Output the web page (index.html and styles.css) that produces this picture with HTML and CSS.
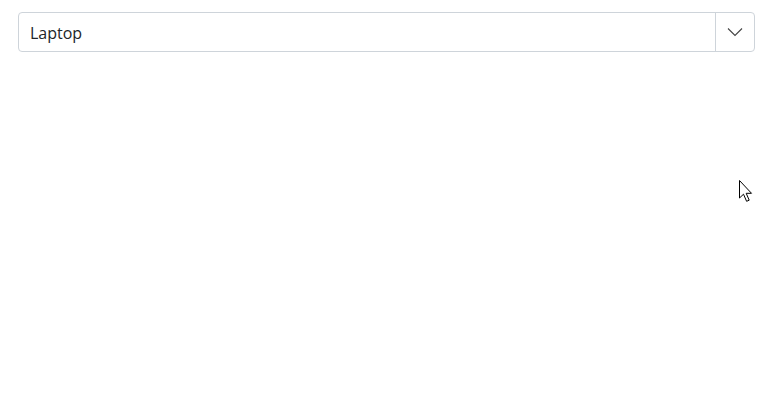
FILE: index.html
```html
<!DOCTYPE html>
<html>
<head>
<meta charset="utf-8">
<link rel="stylesheet" href="styles.css">
</head>
<body>
<div class="page">
  <div class="combo">
    <div class="combo-value">Laptop</div>
    <div class="combo-button">
      <svg width="16" height="10" viewBox="0 0 16 10"><path d="M1 1.5 L8 8.5 L15 1.5" fill="none" stroke="#444" stroke-width="1.1"/></svg>
    </div>
  </div>
</div>
<svg class="cursor" width="18" height="26" viewBox="0 0 18 26"><path d="M1.5 1.5 L1.5 19 L5.5 15.2 L8.6 22.3 L11.2 21.2 L8.2 14.3 L13.5 14.3 Z" fill="#fff" stroke="#000" stroke-width="1"/></svg>
</body>
</html>
```
FILE: styles.css
```css
html, body {
  margin: 0;
  padding: 0;
  background: #fff;
}
.page {
  padding: 12px 20px 0 18px;
}
.combo {
  display: flex;
  height: 40px;
  box-sizing: border-box;
  border: 1px solid #ced4da;
  border-radius: 4px;
  background: #fff;
  font-family: "Open Sans", "Noto Sans", sans-serif;
  font-size: 16px;
  color: #212529;
}
.combo-value {
  flex: 1;
  display: flex;
  align-items: center;
  padding: 2px 0 0 11px;
}
.combo-button {
  width: 38px;
  border-left: 1px solid #ced4da;
  display: flex;
  align-items: center;
  justify-content: center;
}
.cursor {
  position: absolute;
  left: 738px;
  top: 179px;
}
```
